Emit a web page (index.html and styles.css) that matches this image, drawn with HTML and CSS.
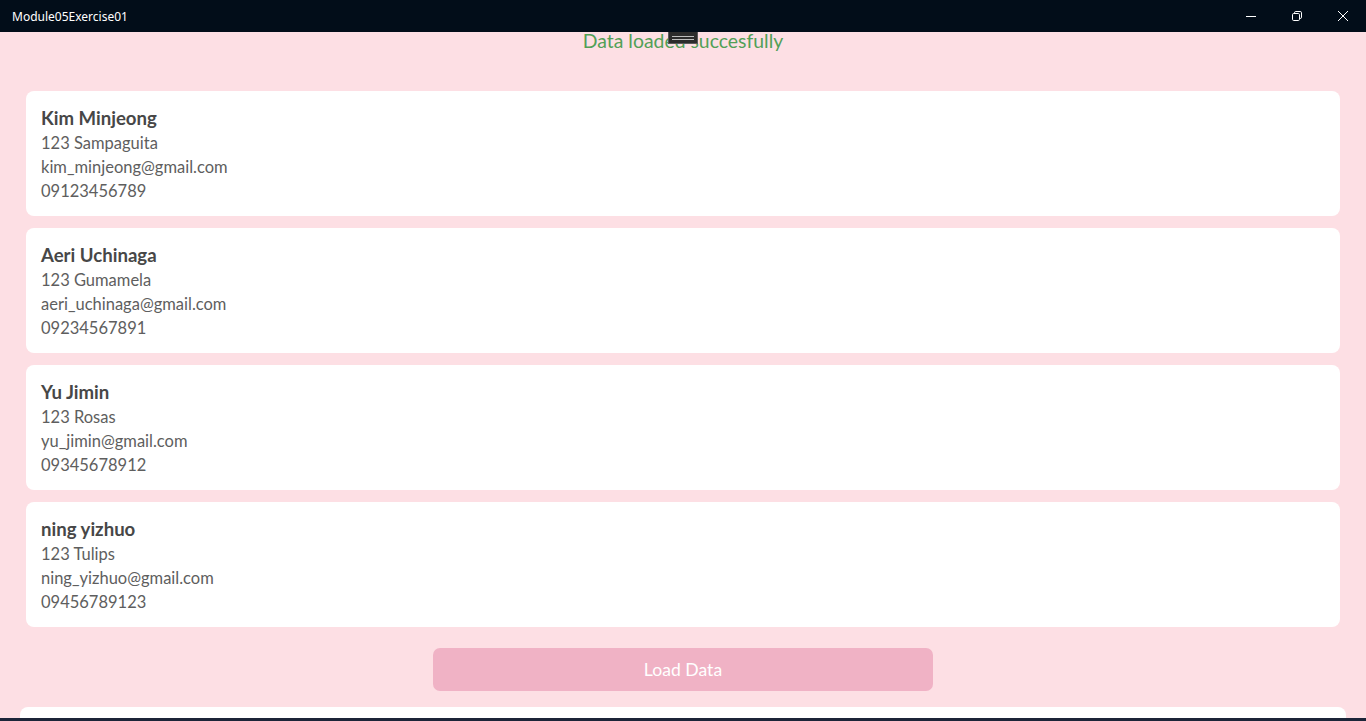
FILE: index.html
```html
<!DOCTYPE html>
<html>
<head>
<meta charset="utf-8">
<link rel="stylesheet" href="styles.css">
</head>
<body>
<div class="window">
  <header class="titlebar">
    <span class="title">Module05Exercise01</span>
    <div class="controls">
      <span class="ctl"><svg width="12" height="12" viewBox="0 0 12 12"><path d="M1 6.5h10" stroke="#fff" stroke-width="1"/></svg></span>
      <span class="ctl"><svg width="12" height="12" viewBox="0 0 12 12" fill="none" stroke="#fff" stroke-width="1"><rect x="1.5" y="3.5" width="7" height="7" rx="1.2"/><path d="M3.5 3.5V2.8a1.3 1.3 0 0 1 1.3-1.3h4.4a1.3 1.3 0 0 1 1.3 1.3v4.4a1.3 1.3 0 0 1-1.3 1.3h-.7"/></svg></span>
      <span class="ctl"><svg width="12" height="12" viewBox="0 0 12 12"><path d="M1 1l10 10M11 1L1 11" stroke="#fff" stroke-width="1"/></svg></span>
    </div>
  </header>
  <main class="content">
    <div class="status">Data loaded succesfully</div>
    <div class="handle"><span></span><span></span></div>
    <div class="list">
      <div class="card">
        <div class="name">Kim Minjeong</div>
        <div class="line">123 Sampaguita</div>
        <div class="line">kim_minjeong@gmail.com</div>
        <div class="line">09123456789</div>
      </div>
      <div class="card">
        <div class="name">Aeri Uchinaga</div>
        <div class="line">123 Gumamela</div>
        <div class="line">aeri_uchinaga@gmail.com</div>
        <div class="line">09234567891</div>
      </div>
      <div class="card">
        <div class="name">Yu Jimin</div>
        <div class="line">123 Rosas</div>
        <div class="line">yu_jimin@gmail.com</div>
        <div class="line">09345678912</div>
      </div>
      <div class="card">
        <div class="name">ning yizhuo</div>
        <div class="line">123 Tulips</div>
        <div class="line">ning_yizhuo@gmail.com</div>
        <div class="line">09456789123</div>
      </div>
    </div>
    <div class="btnrow"><button class="load">Load Data</button></div>
    <div class="bottomcard"></div>
  </main>
  <div class="taskbar"></div>
</div>
</body>
</html>
```
FILE: styles.css
```css
* { box-sizing: border-box; }
html, body { margin: 0; padding: 0; }
body { width: 1366px; height: 721px; overflow: hidden; font-family: "Lato", "Noto Sans", sans-serif; }
.window { display: flex; flex-direction: column; height: 721px; background: #fddfe4; }
.titlebar { height: 32px; flex: none; background: #020d19; display: flex; align-items: center; justify-content: space-between; padding-left: 12px; }
.title { color: #fff; font-family: "Noto Sans", "Liberation Sans", sans-serif; font-size: 12px; }
.controls { display: flex; height: 32px; }
.ctl { width: 46px; height: 32px; display: flex; align-items: center; justify-content: center; }
.content { flex: 1; position: relative; display: flex; flex-direction: column; overflow: hidden; }
.content > * { flex-shrink: 0; }
.status { text-align: center; color: #52a057; font-size: 19.4px; line-height: 18px; height: 59px; }
.handle { position: absolute; left: 668px; top: 0; width: 30px; height: 12px; background: #2b2b2b; border: 1px solid #5a5a5a; border-top: none; display: flex; flex-direction: column; justify-content: center; gap: 2px; padding: 0 3px; }
.handle span { height: 1px; background: #bdbdbd; display: block; }
.list { display: flex; flex-direction: column; gap: 12px; padding: 0 26px; }
.card { background: #fff; border-radius: 8px; height: 125px; padding: 16px 15px 0; color: #5e5e5e; }
.name { font-size: 18.6px; font-weight: 700; color: #474747; line-height: 22px; height: 24px; }
.line { font-size: 16.5px; line-height: 24px; }
.btnrow { display: flex; justify-content: center; padding-top: 21px; }
.load { width: 500px; height: 43px; border: none; border-radius: 7px; background: #f0b2c5; color: #fff; font-family: inherit; font-size: 17.6px; }
.bottomcard { margin: 16px 20px 0; height: 20px; background: #fff; border-radius: 8px 8px 0 0; }
.taskbar { height: 3px; flex: none; background: #1c2438; }
```
